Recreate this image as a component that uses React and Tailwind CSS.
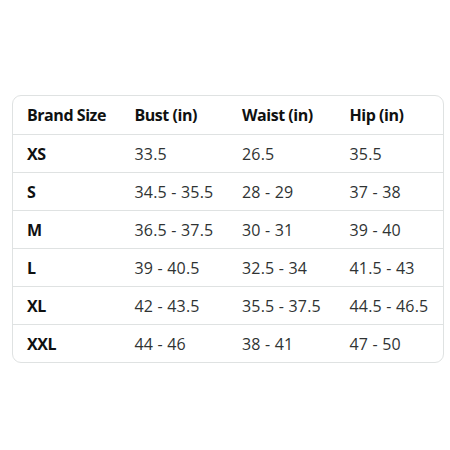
import React from "react";

const rows = [
  ["XS", "33.5", "26.5", "35.5"],
  ["S", "34.5 - 35.5", "28 - 29", "37 - 38"],
  ["M", "36.5 - 37.5", "30 - 31", "39 - 40"],
  ["L", "39 - 40.5", "32.5 - 34", "41.5 - 43"],
  ["XL", "42 - 43.5", "35.5 - 37.5", "44.5 - 46.5"],
  ["XXL", "44 - 46", "38 - 41", "47 - 50"],
];

export default function App() {
  return (
    <div className="w-[450px] h-[450px] bg-white pt-[95px] pl-[12px]" style={{ fontFamily: '"Open Sans", "Noto Sans", sans-serif' }}>
      <div className="w-[432px] border border-[#dfe2e2] rounded-[9px] overflow-hidden text-[16px] text-[#0f1111]">
        <div className="grid grid-cols-4 h-[38px] items-center font-bold tracking-[-0.45px]">
          {["Brand Size", "Bust (in)", "Waist (in)", "Hip (in)"].map((h) => (
            <div key={h} className="pl-[14px]">{h}</div>
          ))}
        </div>
        {rows.map((r) => (
          <div key={r[0]} className="grid grid-cols-4 h-[38px] items-center border-t border-[#dfe2e2]">
            {r.map((c, i) => (
              <div key={i} className={i === 0 ? "pl-[14px] font-bold tracking-[-0.45px]" : "pl-[14px] text-[#2f3333] tracking-[0.2px]"}>{c}</div>
            ))}
          </div>
        ))}
      </div>
    </div>
  );
}
